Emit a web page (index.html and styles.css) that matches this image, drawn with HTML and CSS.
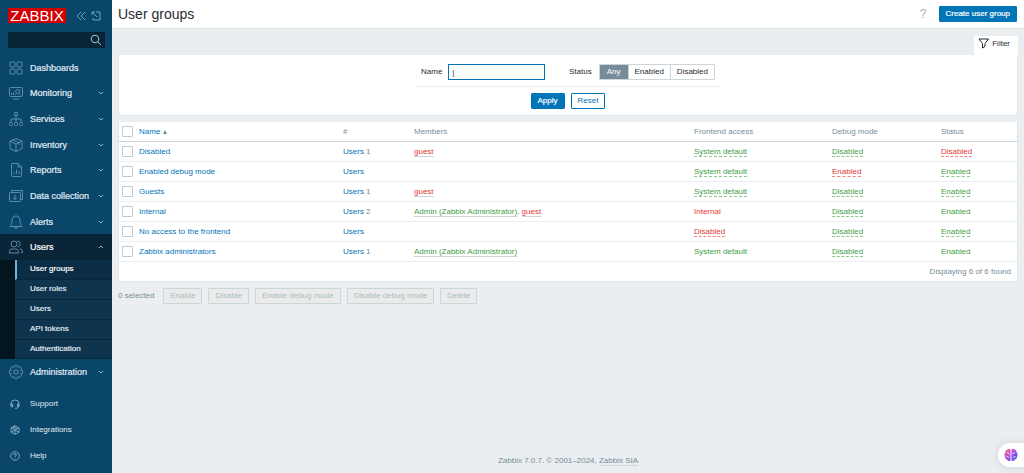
FILE: index.html
```html
<!DOCTYPE html>
<html lang="en">
<head>
<meta charset="utf-8">
<title>User groups</title>
<link rel="stylesheet" href="styles.css">
</head>
<body>
<svg class="defs" aria-hidden="true">
  <symbol id="down" viewBox="0 0 6 6"><path d="M1 2l2 2 2-2"/></symbol>
</svg>
<aside class="sidebar">
  <div class="brand">
    <a class="logo" href="#">ZABBIX</a>
    <button class="icon-btn" aria-label="Collapse sidebar"><svg viewBox="0 0 10 10" width="10" height="10"><path d="M5 1L1 5l4 4M9 1L5 5l4 4"/></svg></button>
    <button class="icon-btn" aria-label="Hide sidebar"><svg viewBox="0 0 10 10" width="10" height="10"><path d="M5 1h4v8H2V7M1 1l5 5M1 4V1h3"/></svg></button>
  </div>
  <form class="search">
    <input type="text" aria-label="Search">
    <button aria-label="Search"><svg viewBox="0 0 12 12" width="12" height="12"><circle cx="5" cy="5" r="3.8"/><path d="M8 8l3 3"/></svg></button>
  </form>
  <nav>
    <div class="menu">
      <a href="#"><svg viewBox="0 0 14 14"><rect x="1" y="1" width="5" height="5" rx="1"/><rect x="8" y="1" width="5" height="5" rx="1"/><rect x="1" y="8" width="5" height="5" rx="1"/><rect x="8" y="8" width="5" height="5" rx="1"/></svg><span>Dashboards</span></a>
      <a href="#"><svg viewBox="0 0 14 14"><rect x=".5" y="1.5" width="13" height="9" rx="1"/><path d="M4 13h6M2.500 9V7M4.500 9V6M6.500 9V8M10 7.500l2 2"/><circle cx="8.700" cy="5.500" r="2"/></svg><span>Monitoring</span><svg class="chev"><use href="#down"/></svg></a>
      <a href="#"><svg viewBox="0 0 14 14"><rect x="5.500" y=".5" width="3" height="3" rx=".5"/><path d="M7 3.500v7M2 10V7h10v3"/><rect x=".5" y="10.500" width="3" height="3" rx="1"/><rect x="5.500" y="10.500" width="3" height="3" rx="1"/><rect x="10.500" y="10.500" width="3" height="3" rx="1"/></svg><span>Services</span><svg class="chev"><use href="#down"/></svg></a>
      <a href="#"><svg viewBox="0 0 14 14"><path d="M7 .5l6 2.700v7.300l-6 3-6-3V3.200zM1 3.200l6 2.800 6-2.800M7 6v7.500M4 2l6 2.700v2.500"/></svg><span>Inventory</span><svg class="chev"><use href="#down"/></svg></a>
      <a href="#"><svg viewBox="0 0 14 14"><path d="M3 .5h6l3.500 3.500v8.500q0 1-1 1h-8q-1 0-1-1V1.500q0-1 1-1zM9 .5V4h3.500M5 11V9M7.500 11V6.500M10 11V8"/></svg><span>Reports</span><svg class="chev"><use href="#down"/></svg></a>
      <a href="#"><svg viewBox="0 0 14 14"><rect x=".5" y="3.500" width="11" height="9" rx="1"/><path d="M2.500 3.500v-2h11v9h-2M6 5.500v5M4 8.500l2 2 2-2"/></svg><span>Data collection</span><svg class="chev"><use href="#down"/></svg></a>
      <a href="#"><svg viewBox="0 0 14 14"><path d="M1 11.500h12q-2-1.500-2-5Q11 1 7 1T3 6.500q0 3.500-2 5zM5.500 11.500q0 2 1.500 2t1.500-2"/></svg><span>Alerts</span><svg class="chev"><use href="#down"/></svg></a>
      <a href="#" class="open"><svg viewBox="0 0 14 14"><circle cx="5" cy="4" r="3"/><path d="M.5 13V11.500Q.5 9 3 9h4q2.500 0 2.500 2.500V13zM8 1.300q3-.8 3.300 2.200Q11.500 6 9 7M11 8.500q2.500.5 2.500 4H12"/></svg><span>Users</span><svg class="chev up"><use href="#down"/></svg></a>
    </div>
    <div class="submenu">
      <a href="#" class="current">User groups</a>
      <a href="#">User roles</a>
      <a href="#">Users</a>
      <a href="#">API tokens</a>
      <a href="#">Authentication</a>
    </div>
    <div class="menu single">
      <a href="#"><svg viewBox="0 0 14 14"><circle cx="7" cy="7" r="2.200"/><path d="M5.700.5h2.600l.5 1.900 1.800-1 1.900 1.900-1 1.800 2 .6v2.600l-2 .5 1 1.900-1.900 1.800-1.800-1-.5 2H5.700l-.5-2-1.800 1-1.900-1.800 1-1.900-2-.5V5.700l2-.6-1-1.800 1.900-1.900 1.800 1z"/></svg><span>Administration</span><svg class="chev"><use href="#down"/></svg></a>
    </div>
  </nav>
  <div class="help-links">
    <a href="#"><svg viewBox="0 0 10 10"><path d="M1 7V4.500Q1 1 5 1t4 3.500V7M1 5h1.500v3H1.500L1 7zM9 5H7.500v3h1zM8.500 8L7 9.300H5"/></svg>Support</a>
    <a href="#"><svg viewBox="0 0 10 10"><path d="M5 .7l4 2v4.600l-4 2-4-2V2.700zM1 2.700l8 4.600M9 2.700L1 7.300M5 5v4.300M3 1.700l4 2M5 .7L3 4"/></svg>Integrations</a>
    <a href="#"><svg viewBox="0 0 10 10"><circle cx="5" cy="5" r="4.300"/><path d="M3.600 4q0-1.500 1.400-1.500T6.400 4Q6.400 4.600 5 5.300V6M5 7v.8"/></svg>Help</a>
  </div>
</aside>
<div class="page">
  <header class="title-bar">
    <h1>User groups</h1>
    <a class="help" href="#" aria-label="Help">?</a>
    <button class="btn primary">Create user group</button>
  </header>
  <main>
    <div class="tabs"><a class="tab" href="#"><svg viewBox="0 0 11 11" width="11" height="11"><path d="M1 1h9.500L7 5.500V8.500L4.500 10V5.500z"/></svg>Filter</a></div>
    <form class="filter">
      <div class="fields">
        <label for="name">Name</label>
        <input id="name" class="text" type="text" value="|">
        <fieldset class="status">
          <legend>Status</legend>
          <div class="segments">
            <label><input type="radio" name="status" checked><span>Any</span></label>
            <label><input type="radio" name="status"><span>Enabled</span></label>
            <label><input type="radio" name="status"><span>Disabled</span></label>
          </div>
        </fieldset>
      </div>
      <div class="actions">
        <button type="button" class="btn primary">Apply</button>
        <button type="button" class="btn">Reset</button>
      </div>
    </form>
    <div class="panel">
      <table>
        <colgroup><col class="c-check"><col class="c-name"><col class="c-count"><col><col class="c-access"><col class="c-debug"><col class="c-status"></colgroup>
        <thead>
          <tr><th><input type="checkbox" aria-label="Select all"></th><th><a href="#">Name <i class="sort"></i></a></th><th>#</th><th>Members</th><th>Frontend access</th><th>Debug mode</th><th>Status</th></tr>
        </thead>
        <tbody>
          <tr><td><input type="checkbox" aria-label="Disabled"></td><td><a href="#">Disabled</a></td><td><a href="#">Users</a> 1</td><td><a class="member red" href="#">guest</a></td><td><a class="toggle green" href="#">System default</a></td><td><a class="toggle green" href="#">Disabled</a></td><td><a class="toggle red" href="#">Disabled</a></td></tr>
          <tr><td><input type="checkbox" aria-label="Enabled debug mode"></td><td><a href="#">Enabled debug mode</a></td><td><a href="#">Users</a></td><td></td><td><a class="toggle green" href="#">System default</a></td><td><a class="toggle red" href="#">Enabled</a></td><td><a class="toggle green" href="#">Enabled</a></td></tr>
          <tr><td><input type="checkbox" aria-label="Guests"></td><td><a href="#">Guests</a></td><td><a href="#">Users</a> 1</td><td><a class="member red" href="#">guest</a></td><td><a class="toggle green" href="#">System default</a></td><td><a class="toggle green" href="#">Disabled</a></td><td><a class="toggle green" href="#">Enabled</a></td></tr>
          <tr><td><input type="checkbox" aria-label="Internal"></td><td><a href="#">Internal</a></td><td><a href="#">Users</a> 2</td><td><a class="member green" href="#">Admin (Zabbix Administrator)</a>, <a class="member red" href="#">guest</a></td><td><span class="red">Internal</span></td><td><a class="toggle green" href="#">Disabled</a></td><td><span class="green">Enabled</span></td></tr>
          <tr><td><input type="checkbox" aria-label="No access to the frontend"></td><td><a href="#">No access to the frontend</a></td><td><a href="#">Users</a></td><td></td><td><a class="toggle red" href="#">Disabled</a></td><td><a class="toggle green" href="#">Disabled</a></td><td><a class="toggle green" href="#">Enabled</a></td></tr>
          <tr><td><input type="checkbox" aria-label="Zabbix administrators"></td><td><a href="#">Zabbix administrators</a></td><td><a href="#">Users</a> 1</td><td><a class="member green" href="#">Admin (Zabbix Administrator)</a></td><td><span class="green">System default</span></td><td><a class="toggle green" href="#">Disabled</a></td><td><span class="green">Enabled</span></td></tr>
        </tbody>
      </table>
      <div class="summary">Displaying 6 of 6 found</div>
    </div>
    <div class="bulk">
      <span>0 selected</span>
      <button class="btn" disabled>Enable</button>
      <button class="btn" disabled>Disable</button>
      <button class="btn" disabled>Enable debug mode</button>
      <button class="btn" disabled>Disable debug mode</button>
      <button class="btn" disabled>Delete</button>
    </div>
  </main>
  <footer>Zabbix 7.0.7. © 2001–2024, <a href="#">Zabbix SIA</a></footer>
</div>
<button class="assistant" aria-label="Assistant">
  <svg viewBox="0 0 14 14" width="14" height="14">
    <defs><linearGradient id="brain" x1="0" y1="0" x2="1" y2="1"><stop offset="0" stop-color="#ff7a50"/><stop offset=".4" stop-color="#c44fe0"/><stop offset=".7" stop-color="#7547e8"/><stop offset="1" stop-color="#3cb4ee"/></linearGradient></defs>
    <path fill="url(#brain)" d="M6.500 1.500Q5-.2 3.500 1.500 1.300 2 1.500 4.200-.3 6 .8 8q-.3 2.500 1.700 3.200 1.500 2.800 4 1.300zM7.500 1.500Q9-.2 10.500 1.500q2.200.5 2 2.700 1.800 1.800.7 3.800.3 2.500-1.700 3.200-1.500 2.800-4 1.300z"/>
    <path class="fold" d="M3 4.500q2 0 2 2M2.500 8.500q2-.5 2.500 1.500M11 4.500q-2 0-2 2M11.500 8.500q-2-.5-2.500 1.500"/>
  </svg>
</button>
</body>
</html>
```
FILE: styles.css
```css
* { box-sizing: border-box; }

body {
  margin: 0;
  min-height: 100vh;
  display: flex;
  background: #ebeef0;
  color: #1f2c33;
  font: 8px/12px "Liberation Sans", Arial, sans-serif;
}

button, input { font: inherit; color: inherit; }
a { color: #0275b8; text-decoration: none; }
svg { fill: none; stroke: currentColor; flex: none; }
.defs { display: none; }

/* Sidebar */
.sidebar {
  flex: none;
  width: 112px;
  display: flex;
  flex-direction: column;
  background: #0a466a;
}
.sidebar a { color: #e0edf5; }

.brand {
  display: flex;
  align-items: center;
  gap: 5px;
  padding: 8px 8px 9px;
}
.sidebar .logo {
  width: 58px;
  margin-right: 5px;
  background: #d40000;
  color: #fff;
  font-size: 15px;
  line-height: 15px;
  text-align: center;
}
.icon-btn, .search button {
  display: flex;
  padding: 0;
  border: 0;
  background: none;
  color: #6ea4c5;
}

.search {
  display: flex;
  align-items: center;
  height: 16px;
  margin: 0 7px 7px 8px;
  padding-right: 2px;
  background: #0a2537;
  border: 1px solid #082031;
  border-radius: 1px;
}
.search input {
  flex: 1;
  min-width: 0;
  border: 0;
  padding: 0 4px;
  background: none;
}
.search button { color: #a3c5da; }

.menu {
  display: grid;
  grid-auto-rows: 1fr;
  height: 205px;
}
.menu.single { height: 25px; }
.menu a {
  display: flex;
  align-items: center;
  gap: 7px;
  padding: 0 8px 0 9px;
  font-size: 9px;
  -webkit-text-stroke: 0.2px;
}
.menu a.open { background: #0a2537; color: #fff; }
.menu svg {
  width: 14px;
  height: 14px;
  color: #6c9fbf;
  stroke-width: 0.8;
}
.menu span { flex: 1; white-space: nowrap; }
.menu .chev { width: 6px; height: 6px; margin-left: -7px; color: #b5d0e0; }
.menu .up { transform: rotate(180deg); }

.submenu {
  padding-left: 15px;
  background: #03161f;
}
.submenu a {
  display: block;
  height: 20px;
  padding-left: 13px;
  border-left: 2px solid #0f344d;
  border-bottom: 1px solid #0a2537;
  background: #0f344d;
  line-height: 18px;
  -webkit-text-stroke: 0.2px;
}
.submenu .current { border-left-color: #6fb1e5; background: #0a2c44; color: #fff; }
.submenu a:last-child { height: 19px; }

.help-links { padding-top: 7px; }
.help-links a {
  display: flex;
  align-items: center;
  gap: 10px;
  height: 26px;
  padding-left: 10px;
}
.help-links svg { width: 10px; height: 10px; color: #8fb9d2; stroke-width: 0.8; }

/* Page */
.page {
  flex: 1;
  min-width: 0;
  display: flex;
  flex-direction: column;
}
.title-bar {
  display: flex;
  align-items: center;
  height: 29px;
  padding: 0 7px 0 6px;
  background: #fff;
  border-bottom: 1px solid #dfe4e7;
}
h1 { flex: 1; margin: 0; font-size: 14px; line-height: 16px; font-weight: 400; }
.help { margin-right: 12px; color: #a3b0b8; font-size: 12px; }

.btn {
  height: 16px;
  padding: 0 6px;
  border: 1px solid #0275b8;
  border-radius: 1px;
  background: #fff;
  color: #0275b8;
  line-height: 12px;
  white-space: nowrap;
}
.btn.primary { background: #0275b8; color: #fff; -webkit-text-stroke: 0.2px; }
.btn:disabled { background: #ebebeb; border-color: #ccd5d9; color: #acbbc2; }

main { padding: 7px 6px 0; }
.tabs { display: flex; justify-content: flex-end; }
.tab {
  display: flex;
  align-items: center;
  gap: 3px;
  height: 19px;
  padding: 0 8px 4px 4px;
  background: #fff;
  color: #1f2c33;
}

.filter {
  display: flex;
  flex-direction: column;
  align-items: center;
  height: 61px;
  margin-bottom: 6px;
  padding-top: 9px;
  background: #fff;
  border: 1px solid #dfe4e7;
  border-top: 0;
}
.fields {
  display: flex;
  align-items: center;
  width: 306px;
  padding: 0 6px 6px;
  border-bottom: 1px solid #ebeef0;
}
.text {
  width: 97px;
  height: 16px;
  margin-left: 6px;
  padding: 0 3px;
  border: 1px solid #0275b8;
}
.status {
  display: flex;
  align-items: center;
  margin: 0 0 0 auto;
  padding: 0;
  border: 0;
}
.status legend { float: left; padding: 0; margin-right: 7px; }
.segments { display: flex; border: 1px solid #ccd5d9; border-radius: 1px; }
.segments label + label { border-left: 1px solid #ccd5d9; }
.segments input { position: absolute; opacity: 0; }
.segments span { display: block; padding: 0 6px; line-height: 14px; }
.segments :checked + span { padding: 0 7px; background: #768d99; color: #fff; }
.actions { display: flex; gap: 6px; padding-top: 6px; }

/* Table */
.panel { background: #fff; border: 1px solid #dfe4e7; border-top: 0; }
table {
  width: 100%;
  table-layout: fixed;
  border-collapse: separate;
  border-spacing: 0;
}
.c-check { width: 16px; }
.c-name { width: 204px; }
.c-count { width: 71px; }
.c-access { width: 138px; }
.c-debug { width: 109px; }
.c-status { width: 80px; }
th, td {
  height: 20px;
  padding: 0 4px;
  border-bottom: 1px solid #ebeef0;
  text-align: left;
  font-weight: 400;
  color: #768d99;
  white-space: nowrap;
}
th { border-bottom-color: #ccd5d9; }
th:first-child, td:first-child { padding: 0 0 0 3px; }
input[type="checkbox"] {
  appearance: none;
  display: block;
  width: 11px;
  height: 11px;
  margin: 0;
  background: #fff;
  border: 1px solid #c0cbd1;
  border-radius: 1px;
}
.sort {
  display: inline-block;
  border: 2px solid transparent;
  border-top: 0;
  border-bottom: 4px solid #768d99;
}
.red { color: #e33734; }
.green { color: #429e47; }
.toggle { border-bottom: 1px dashed #8fc592; }
.toggle.red { border-bottom-color: #ee8684; }
.member { border-bottom: 1px solid #ccd5d9; }
.summary { height: 19px; padding-right: 6px; line-height: 19px; text-align: right; color: #768d99; }

.bulk {
  display: flex;
  align-items: center;
  gap: 6px;
  padding-top: 6px;
  color: #768d99;
}
.bulk span { margin-right: 3px; }

footer { margin-top: auto; padding-bottom: 6px; text-align: center; color: #768d99; }
footer a { color: inherit; border-bottom: 1px solid #ccd5d9; }

/* Floating launcher over the page edge */
.assistant {
  position: fixed;
  right: 0;
  bottom: 6px;
  display: flex;
  align-items: center;
  width: 26px;
  height: 24px;
  padding: 0 6px;
  border: 0;
  border-radius: 12px 0 0 12px;
  background: #fff;
  box-shadow: 0 0 8px rgba(0, 0, 0, 0.12);
}
.assistant svg { stroke: none; }
.assistant .fold { stroke: #fff; stroke-width: 0.7; }
```
